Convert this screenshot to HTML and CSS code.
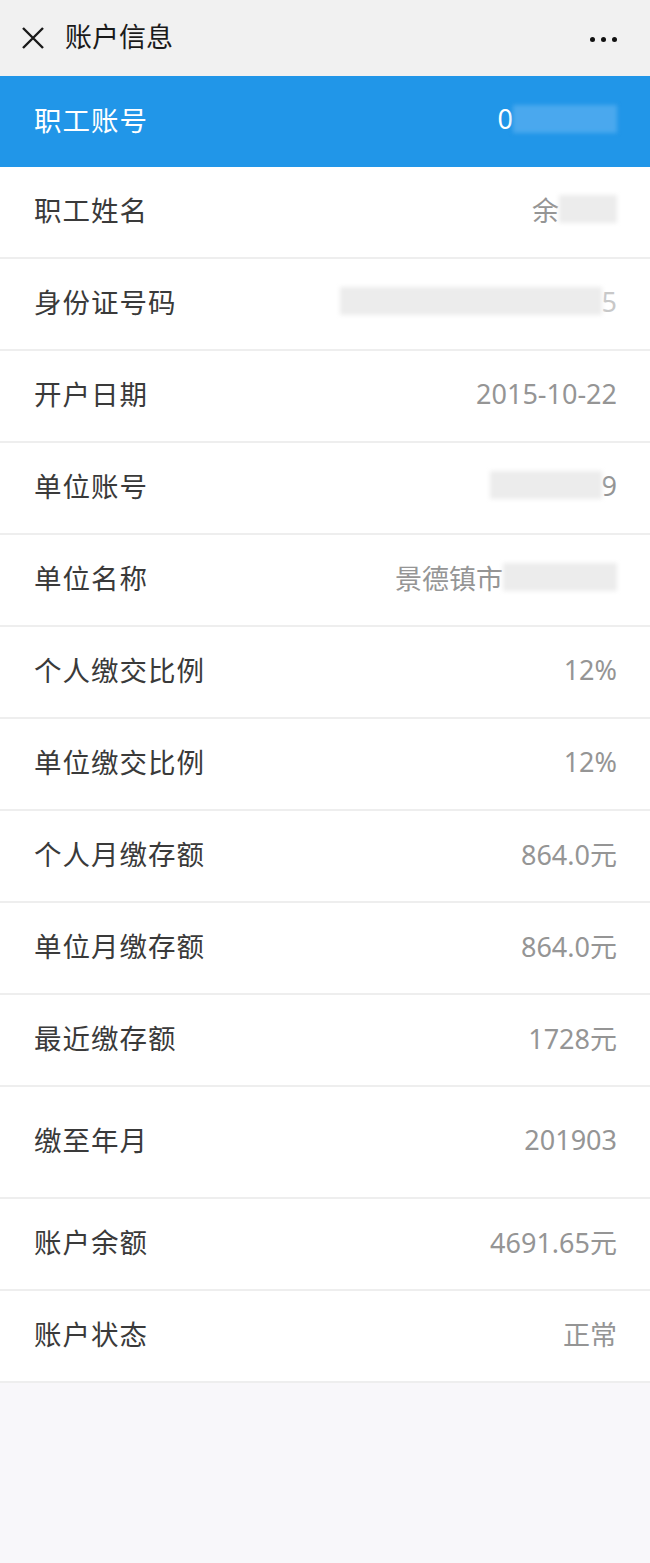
FILE: index.html
```html
<!DOCTYPE html>
<html lang="zh-CN">

<head>
    <meta charset="UTF-8">
    <meta name="viewport" content="width=device-width, initial-scale=1.0">
    <title>账户信息</title>
    <link rel="stylesheet" href="styles.css">
</head>

<body>

    <header class="topbar">
        <div class="topbar-left">
            <svg class="close-icon" width="24" height="24" viewBox="0 0 24 24">
                <path d="M2 2 L22 22 M22 2 L2 22" stroke="#1a1a1a" stroke-width="2.4" fill="none" />
            </svg>
            <span class="topbar-title">账户信息</span>
        </div>
        <div class="more">
            <span class="dot"></span><span class="dot"></span><span class="dot"></span>
        </div>
    </header>

    <main class="info-list">
        <div class="row active">
            <span class="label">职工账号</span>
            <span class="value">0<span class="mask mask-blue" style="width: 104px"></span></span>
        </div>
        <div class="row">
            <span class="label">职工姓名</span>
            <span class="value">余<span class="mask" style="width: 58px"></span></span>
        </div>
        <div class="row">
            <span class="label">身份证号码</span>
            <span class="value"><span class="mask" style="width: 262px"></span><span class="faint">5</span></span>
        </div>
        <div class="row">
            <span class="label">开户日期</span>
            <span class="value">2015-10-22</span>
        </div>
        <div class="row">
            <span class="label">单位账号</span>
            <span class="value"><span class="mask" style="width: 112px"></span>9</span>
        </div>
        <div class="row">
            <span class="label">单位名称</span>
            <span class="value">景德镇市<span class="mask" style="width: 114px"></span></span>
        </div>
        <div class="row">
            <span class="label">个人缴交比例</span>
            <span class="value">12%</span>
        </div>
        <div class="row">
            <span class="label">单位缴交比例</span>
            <span class="value">12%</span>
        </div>
        <div class="row">
            <span class="label">个人月缴存额</span>
            <span class="value">864.0元</span>
        </div>
        <div class="row">
            <span class="label">单位月缴存额</span>
            <span class="value">864.0元</span>
        </div>
        <div class="row">
            <span class="label">最近缴存额</span>
            <span class="value">1728元</span>
        </div>
        <div class="row tall">
            <span class="label">缴至年月</span>
            <span class="value">201903</span>
        </div>
        <div class="row">
            <span class="label">账户余额</span>
            <span class="value">4691.65元</span>
        </div>
        <div class="row">
            <span class="label">账户状态</span>
            <span class="value">正常</span>
        </div>
    </main>

</body>

</html>
```

FILE: styles.css
```css
body,
html {
    margin: 0;
    padding: 0;
    background-color: #f8f7fa;
    font-family: 'Noto Sans', 'Noto Sans CJK SC', sans-serif;
}

.topbar {
    height: 76px;
    display: flex;
    align-items: center;
    justify-content: space-between;
    padding: 0 33px 0 21px;
    background-color: #f1f1f1;
    box-sizing: border-box;
}

.topbar-left {
    display: flex;
    align-items: center;
    gap: 20px;
}

.close-icon {
    display: block;
}

.topbar-title {
    font-family: 'Noto Sans CJK SC', sans-serif;
    font-size: 27px;
    color: #1a1a1a;
    line-height: 1;
    margin-bottom: 5px;
}

.more {
    display: flex;
    gap: 6px;
    align-items: center;
    padding-top: 2px;
}

.dot {
    width: 5px;
    height: 5px;
    border-radius: 50%;
    background-color: #111;
}

.info-list {
    background-color: #fff;
}

/* rows sit a little high in the original, hence the bottom padding */
.row {
    height: 84px;
    display: flex;
    align-items: center;
    justify-content: space-between;
    padding: 0 33px 6px 34px;
    border-bottom: 2px solid #eeeeee;
}

.row.active {
    height: 85px;
    background-color: #2196e8;
    border-bottom: none;
}

.row.tall {
    height: 104px;
}

.label {
    font-family: 'Noto Sans CJK SC', sans-serif;
    font-size: 27.5px;
    color: #3a3a3a;
    letter-spacing: 1px;
}

.value {
    display: flex;
    align-items: center;
    font-size: 27px;
    color: #959595;
}

.active .label,
.active .value {
    color: #fff;
}

.mask {
    display: inline-block;
    height: 28px;
    background-color: #ececec;
    filter: blur(2px);
}

.mask-blue {
    background-color: #4aa8ee;
}

.faint {
    color: #c8c8c8;
}
```
